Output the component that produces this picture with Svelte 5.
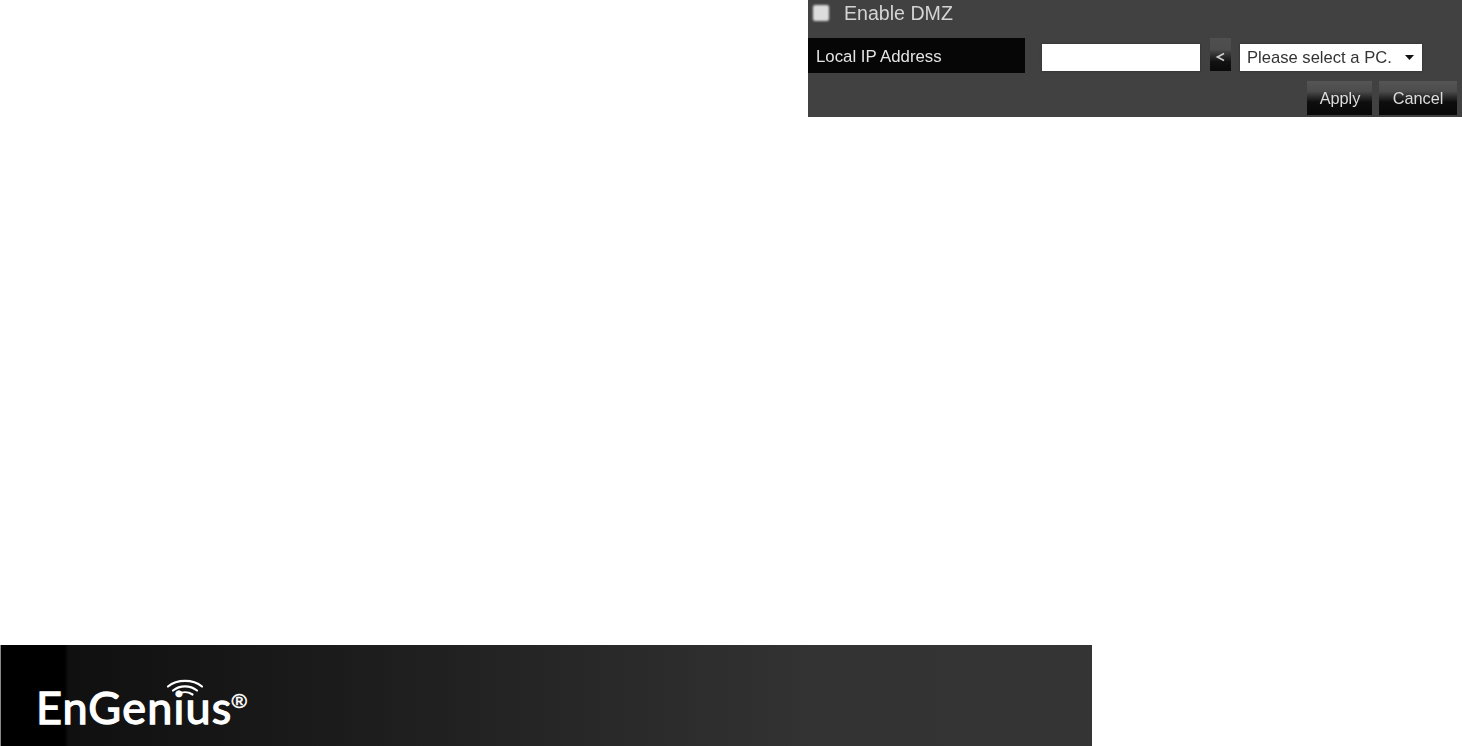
<script>
  const title = 'Enable DMZ';
</script>

<div class="page">
  <section class="panel">
    <div class="dmz">
      <span class="check"></span>
      <span class="dmz-label">{title}</span>
    </div>
    <div class="ip-row">
      <div class="ip-label"><span>Local IP Address</span></div>
      <div class="ip-input"></div>
      <div class="copy">
        <svg class="copy-arrow" width="11" height="10" viewBox="0 0 11 10" fill="none" stroke="#ccc" stroke-width="1.800"><path d="M9 1.500 2.500 5 9 8.500" /></svg>
      </div>
      <div class="select">
        <span>Please select a PC.</span>
        <svg class="caret" width="9" height="5" viewBox="0 0 9 5"><path d="M0 0h9L4.500 5z" fill="#111" /></svg>
      </div>
    </div>
    <div class="actions">
      <div class="btn apply"><span>Apply</span></div>
      <div class="btn cancel"><span>Cancel</span></div>
    </div>
  </section>

  <footer class="footer">
    <div class="logo">
      <span class="word">EnGenius</span>
      <span class="reg">®</span>
      <svg class="wifi" width="38" height="20" viewBox="0 0 38 20" fill="none" stroke="#fff" stroke-linecap="round">
        <path d="M2 7.500C11 0 27 0 36 7.500" stroke-width="2.200" />
        <path d="M7 11.500C14 6 24 6 31 11.500" stroke-width="2.200" />
        <path d="M11.500 15.500C16 12.500 22 12.500 26.500 15.500" stroke-width="2.200" />
      </svg>
    </div>
  </footer>
</div>

<style>
  :global(body) {
    margin: 0;
    background: #fff;
    overflow: hidden;
  }
  .page {
    width: 1462px;
    height: 746px;
    display: flex;
    flex-direction: column;
    font-family: "Liberation Sans", Arial, sans-serif;
  }
  .panel {
    box-sizing: border-box;
    margin-left: 808px;
    width: 654px;
    height: 117px;
    background: #414141;
    display: flex;
    flex-direction: column;
    color: #eee;
  }
  .dmz {
    display: flex;
    align-items: center;
    height: 26px;
    padding-left: 5px;
    gap: 15px;
  }
  .check {
    width: 16px;
    height: 16px;
    border-radius: 2px;
    background: #dcdcdc;
    filter: blur(0.8px);
  }
  .dmz-label {
    font-size: 19.600px;
    color: #d4d4d4;
    filter: blur(0.7px);
  }
  .ip-row {
    display: flex;
    align-items: flex-start;
    margin-top: 12px;
    height: 35px;
  }
  .ip-label {
    box-sizing: border-box;
    width: 217px;
    height: 35px;
    padding-left: 8px;
    background: #060606;
    color: #e4e4e4;
    font-size: 16.800px;
    line-height: 37px;
  }
  .ip-label span,
  .select span,
  .btn span {
    display: inline-block;
    filter: blur(0.7px);
  }
  .ip-input {
    width: 158px;
    height: 27px;
    margin: 6px 0 0 17px;
    background: #fff;
    box-shadow: 0 0 2px #2a2a2a;
  }
  .copy {
    width: 21px;
    height: 33px;
    margin-left: 10px;
    background: linear-gradient(#4f4f4f 0, #4c4c4c 35%, #111 72%, #0a0a0a 100%);
    display: flex;
    align-items: center;
    justify-content: center;
  }
  .copy-arrow {
    margin-top: 5px;
    filter: blur(0.6px);
  }
  .select {
    box-sizing: border-box;
    width: 182px;
    height: 27px;
    margin: 6px 0 0 9px;
    padding: 0 8px 0 7px;
    background: #fff;
    box-shadow: 0 0 2px #2a2a2a;
    color: #333;
    font-size: 16.600px;
    display: flex;
    align-items: center;
    justify-content: space-between;
  }
  .caret {
    flex: none;
  }
  .actions {
    display: flex;
    justify-content: flex-end;
    gap: 7px;
    margin-top: 8px;
    padding-right: 5px;
  }
  .btn {
    height: 34px;
    display: flex;
    align-items: center;
    justify-content: center;
    padding-top: 1px;
    box-sizing: border-box;
    background: linear-gradient(#555 0, #4c4c4c 30%, #0e0e0e 62%, #080808 100%);
    color: #ddd;
    font-size: 16.300px;
  }
  .apply {
    width: 65px;
    padding-left: 1px;
  }
  .cancel {
    width: 78px;
  }
  .footer {
    box-sizing: border-box;
    margin-top: 528px;
    width: 1092px;
    height: 101px;
    border-left: 1px solid #888;
    background: linear-gradient(90deg, #000 0, #000 5.800%, #101010 6.200%, #1b1b1b 30%, #333 75%, #343434 100%);
    display: flex;
    align-items: flex-start;
  }
  .logo {
    position: relative;
    margin: 35px 0 0 35px;
    display: flex;
    align-items: flex-start;
    color: #fff;
  }
  .word {
    font-family: Lato, "Liberation Sans", sans-serif;
    font-size: 45px;
    line-height: 54px;
    letter-spacing: 1.200px;
    -webkit-text-stroke: 1.300px #fff;
  }
  .reg {
    font-size: 21px;
    line-height: 24px;
    margin: 9px 0 0 -1px;
    -webkit-text-stroke: 0.500px #fff;
  }
  .wifi {
    position: absolute;
    left: 130px;
    top: -1px;
  }
</style>
